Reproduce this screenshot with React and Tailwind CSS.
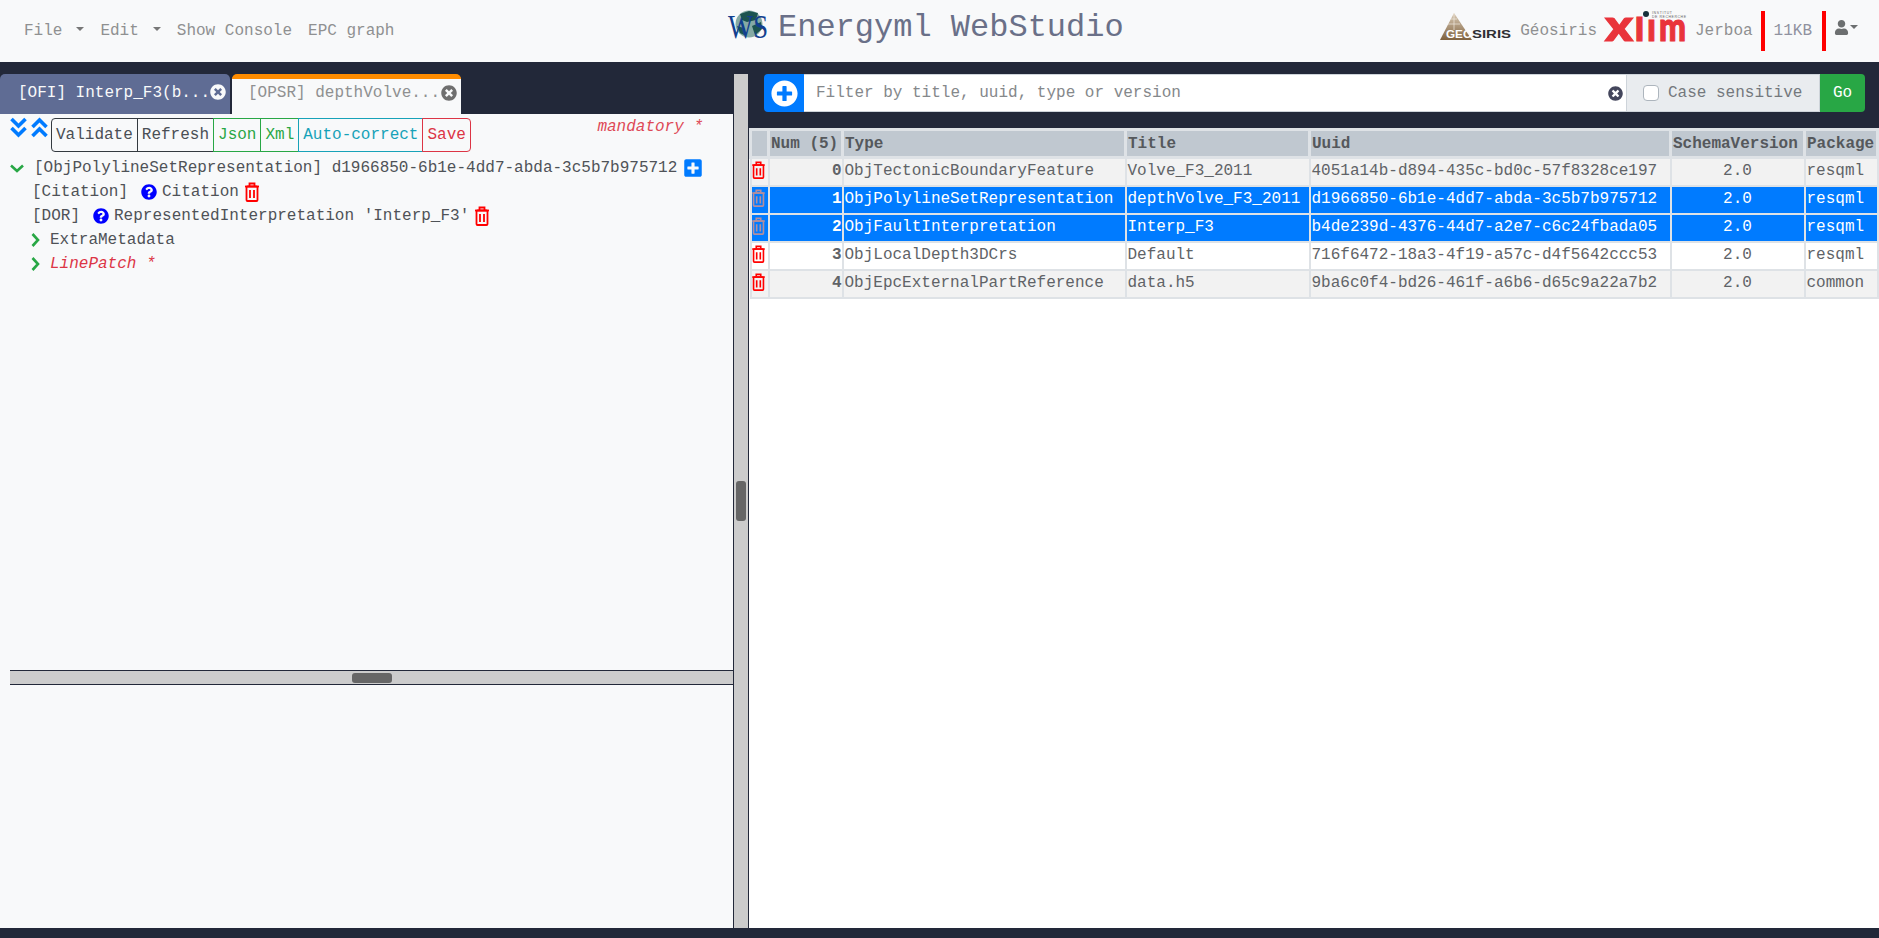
import React from "react";
import { FaPlusCircle, FaPlusSquare, FaQuestionCircle, FaTimesCircle, FaUser } from "react-icons/fa";

const rows = [
  ["ObjTectonicBoundaryFeature", "Volve_F3_2011", "4051a14b-d894-435c-bd0c-57f8328ce197", "resqml"],
  ["ObjPolylineSetRepresentation", "depthVolve_F3_2011", "d1966850-6b1e-4dd7-abda-3c5b7b975712", "resqml"],
  ["ObjFaultInterpretation", "Interp_F3", "b4de239d-4376-44d7-a2e7-c6c24fbada05", "resqml"],
  ["ObjLocalDepth3DCrs", "Default", "716f6472-18a3-4f19-a57c-d4f5642ccc53", "resqml"],
  ["ObjEpcExternalPartReference", "data.h5", "9ba6c0f4-bd26-461f-a6b6-d65c9a22a7b2", "common"],
];

const toolbarButtons = [
  ["Validate", "border-[#343a40] text-[#4a4f55] rounded-l-[4px]"],
  ["Refresh", "border-[#343a40] text-[#4a4f55] -ml-px"],
  ["Json", "border-[#28a745] text-[#28a745] -ml-px"],
  ["Xml", "border-[#28a745] text-[#28a745] -ml-px"],
  ["Auto-correct", "border-[#17a2b8] text-[#17a2b8] -ml-px"],
  ["Save", "border-[#dc3545] text-[#dc3545] -ml-px rounded-r-[4px]"],
];

const WsLogo = () => (
  <svg width="42" height="40" viewBox="0 0 42 40" className="shrink-0 overflow-visible">
    <circle cx="22" cy="16" r="13.5" fill="#86aaa4" />
    <path d="M13 6 L22 3 L31 5 L29 12 L20 14 L15 12 Z M25 18 L34 14 L35 21 L28 27 Z M10 18 L17 20 L19 28 L13 25 Z" fill="#1c5450" />
    <text x="1" y="30" fontFamily="Liberation Serif" fontSize="33" textLength="40" lengthAdjust="spacingAndGlyphs" fill="#123f8f">WS</text>
  </svg>
);

const GeosirisLogo = () => (
  <svg width="72" height="28" viewBox="0 0 72 28" className="shrink-0 overflow-visible">
    <defs>
      <linearGradient id="geoFill" x1="0" y1="0" x2="0" y2="1">
        <stop offset="0" stopColor="#d9cbb6" />
        <stop offset="1" stopColor="#80623f" />
      </linearGradient>
    </defs>
    <path d="M0 27 L14 0 L32 27 Z" fill="url(#geoFill)" />
    <path d="M14 0 L14 17 M8 11 L20 11 M11 6 L17 6" stroke="#f0e9df" strokeWidth="0.7" />
    <text x="6" y="25" fontFamily="Liberation Sans" fontWeight="700" fontSize="10.5" textLength="26" lengthAdjust="spacingAndGlyphs" fill="#ffffff">GEO</text>
    <text x="32" y="25" fontFamily="Liberation Sans" fontWeight="700" fontSize="10.5" textLength="39" lengthAdjust="spacingAndGlyphs" fill="#2f2f33">SIRIS</text>
  </svg>
);

// letters sized one by one, the real logo has a low l and a big x
const XlimLogo = () => (
  <svg width="82" height="32" viewBox="0 0 82 32" className="shrink-0 overflow-visible">
    <circle cx="41" cy="4" r="3" fill="#17303b" />
    <text x="47" y="4" fontFamily="Liberation Sans" fontSize="3.5" textLength="20" fill="#666666">INSTITUT</text>
    <text x="47" y="8" fontFamily="Liberation Sans" fontSize="3.5" textLength="34" fill="#666666">DE RECHERCHE</text>
    <g fontFamily="Lato, Liberation Sans" fontWeight="900" fill="#e9343b" stroke="#e9343b" strokeWidth="1.2">
      <text x="0" y="31" fontSize="44" textLength="28" lengthAdjust="spacingAndGlyphs">x</text>
      <text x="30" y="31" fontSize="32" textLength="9" lengthAdjust="spacingAndGlyphs">l</text>
      <text x="42" y="31" fontSize="40" textLength="9" lengthAdjust="spacingAndGlyphs">ı</text>
      <text x="54" y="31" fontSize="40" textLength="27" lengthAdjust="spacingAndGlyphs">m</text>
    </g>
  </svg>
);

// outlined bin with two bars, the icon package versions have three
const TrashIcon = ({ width = 16, height = 20, color = "#ff0000" }) => (
  <svg width={width} height={height} viewBox="0 0 16 20" fill="none" stroke={color} strokeWidth="1.8" className="shrink-0">
    <path d="M1 4.5 H15" />
    <path d="M5.5 4 V1.5 H10.5 V4" />
    <rect x="2.5" y="4.5" width="11" height="14.5" rx="1" />
    <path d="M6 8 V16 M10 8 V16" />
  </svg>
);

const DoubleAngle = ({ up = false }) => (
  <svg width="17" height="21" viewBox="0 0 17 21" fill="none" stroke="#007bff" strokeWidth="3.6" className="shrink-0">
    <g transform={up ? "rotate(180 8.5 10.5)" : undefined}>
      <path d="M1.5 2 L8.5 9 L15.5 2" />
      <path d="M1.5 11 L8.5 18 L15.5 11" />
    </g>
  </svg>
);

const ChevronDown = () => (
  <svg width="14" height="9" viewBox="0 0 14 9" fill="none" stroke="#28a745" strokeWidth="2.6" className="shrink-0">
    <path d="M1 1.5 L7 7 L13 1.5" />
  </svg>
);

const ChevronRight = () => (
  <svg width="9" height="14" viewBox="0 0 9 14" fill="none" stroke="#28a745" strokeWidth="2.6" className="shrink-0">
    <path d="M1.5 1 L7 7 L1.5 13" />
  </svg>
);

export default function App() {
  return (
    <div className="h-[938px] w-[1879px] overflow-hidden bg-[#222839] flex flex-col font-['Liberation_Mono',monospace] text-[16px] leading-6">
      {/* top navbar */}
      <header className="h-[62px] shrink-0 bg-[#f8f9fa] relative flex items-center justify-between pl-6 pr-[21px] text-[#8f9091]">
        <nav className="flex items-center">
          <span className="mr-4 flex items-center">File<span className="ml-[14px] mb-[5px] border-x-4 border-t-4 border-x-transparent border-t-[#777777]" /></span>
          <span className="mr-4 flex items-center">Edit<span className="ml-[14px] mb-[5px] border-x-4 border-t-4 border-x-transparent border-t-[#777777]" /></span>
          <span className="mr-4">Show Console</span>
          <span>EPC graph</span>
        </nav>
        <div className="absolute left-[727px] top-[8px] flex items-center gap-[9px]">
          <WsLogo />
          <span className="text-[32px] leading-10 text-[#6a7088]">Energyml WebStudio</span>
        </div>
        <div className="flex items-center h-10">
          <span className="mb-2"><GeosirisLogo /></span>
          <span className="ml-2">Géosiris</span>
          <span className="ml-2 mb-[10px]"><XlimLogo /></span>
          <span className="ml-2">Jerboa</span>
          <span className="ml-2 w-1 h-10 bg-[#ff0000]" />
          <span className="ml-[9px] text-[#9092a0]">11KB</span>
          <span className="ml-[10px] w-1 h-10 bg-[#ff0000]" />
          <span className="ml-2 flex items-center text-[#6c6f70] mb-2">
            <FaUser className="text-[15px]" />
            <span className="ml-px border-x-[4px] border-t-[4px] border-x-transparent border-t-[#6c6f70]" />
          </span>
        </div>
      </header>

      {/* workspace */}
      <main className="flex-1 min-h-0 flex pt-3">
        {/* left panel */}
        <section className="w-[733px] shrink-0 flex flex-col">
          <div className="h-10 shrink-0 flex items-stretch gap-[2px]">
            <div className="w-[230px] rounded-t-[5px] bg-[#5f6c94] text-[#f8f9fa] flex items-center pl-[18px] pr-1 pb-[2px] justify-between whitespace-nowrap">
              <span>[OFI] Interp_F3(b...</span>
              <FaTimesCircle className="text-[16px] mb-[2px] shrink-0" />
            </div>
            <div className="w-[229px] rounded-t-[5px] bg-[#f8f9fa] border-t-[5px] border-t-[#ff8c00] text-[#8f9091] flex items-center pl-4 pr-1 pb-[7px] justify-between whitespace-nowrap">
              <span>[OPSR] depthVolve...</span>
              <FaTimesCircle className="text-[16px] text-[#6f6f6f] shrink-0" />
            </div>
          </div>
          <div className="h-[556px] shrink-0 bg-[#f8f9fa] relative text-[#4f5257]">
            <div className="flex items-start pt-[3px]">
              <span className="ml-[10px]"><DoubleAngle /></span>
              <span className="ml-1"><DoubleAngle up /></span>
              <div className="flex ml-[3px] mt-px">
                {toolbarButtons.map(([label, cls]) => (
                  <button key={label} className={`h-[34px] px-1 border bg-transparent ${cls}`}>{label}</button>
                ))}
              </div>
            </div>
            <span className="absolute right-[30px] top-[1px] italic text-[#dc3545] opacity-90">mandatory *</span>
            <div className="mt-1 pl-[10px]">
              <div className="h-6 flex items-center">
                <ChevronDown />
                <span className="ml-[10px]">[ObjPolylineSetRepresentation] d1966850-6b1e-4dd7-abda-3c5b7b975712</span>
                <FaPlusSquare className="text-[#007bff] text-[20px] ml-[6px]" />
              </div>
              <div className="h-6 flex items-center pl-[22px]">
                <span>[Citation]</span>
                <FaQuestionCircle className="text-[#0000ff] text-[16px] ml-[13px] mr-[5px]" />
                <span>Citation</span>
                <span className="ml-[5px]"><TrashIcon /></span>
              </div>
              <div className="h-6 flex items-center pl-[22px]">
                <span>[DOR]</span>
                <FaQuestionCircle className="text-[#0000ff] text-[16px] ml-[13px] mr-[5px]" />
                <span>RepresentedInterpretation 'Interp_F3'</span>
                <span className="ml-[5px]"><TrashIcon /></span>
              </div>
              <div className="h-6 flex items-center pl-[21px]">
                <ChevronRight />
                <span className="ml-[10px]">ExtraMetadata</span>
              </div>
              <div className="h-6 flex items-center pl-[21px]">
                <ChevronRight />
                <span className="ml-[10px] italic text-[#dc3545]">LinePatch *</span>
              </div>
            </div>
          </div>
          <div className="flex-1 flex flex-col bg-[#f8f9fa] pl-[10px]">
            <div className="h-[15px] shrink-0 bg-[#cccccc] border-y border-[#222839] flex items-center justify-center">
              <span className="w-10 h-[10px] rounded-[3px] bg-[#666666]" />
            </div>
          </div>
        </section>

        {/* splitter */}
        <div className="w-[16px] shrink-0 bg-[#cccccc] border-x border-[#222839] flex items-center justify-center">
          <span className="w-[10px] h-10 rounded-[3px] bg-[#666666]" />
        </div>

        {/* right panel */}
        <section className="flex-1 min-w-0 flex flex-col">
          <div className="h-[38px] ml-[15px] mr-[14px] mb-[16px] flex shrink-0">
            <div className="w-10 rounded-l-[4px] bg-[#007bff] flex items-center justify-center">
              <FaPlusCircle className="text-white text-[27px]" />
            </div>
            <div className="flex-1 bg-white border-y border-[#ced4da] flex items-center pl-3 pr-[3px] justify-between text-[#85888b]">
              <span>Filter by title, uuid, type or version</span>
              <FaTimesCircle className="text-[#44465c] text-[15px]" />
            </div>
            <div className="w-[194px] bg-[#e9ecef] border border-[#ced4da] flex items-center pl-4 text-[#74787d]">
              <span className="w-4 h-4 rounded-[4px] border border-[#adb5bd] bg-white mr-[9px]" />
              <span>Case sensitive</span>
            </div>
            <div className="w-[45px] rounded-r-[4px] bg-[#28a745] text-white flex items-center justify-center">Go</div>
          </div>
          <div className="flex-1 bg-white">
            <table className="table-fixed border-collapse w-[1130px] text-[#606367] text-[16px]">
              <colgroup>
                <col className="w-[18px]" />
                <col className="w-[74px]" />
                <col className="w-[283px]" />
                <col className="w-[184px]" />
                <col className="w-[361px]" />
                <col className="w-[134px]" />
                <col className="w-[73px]" />
              </colgroup>
              <thead>
                <tr className="h-[28px] bg-[#c0c8d0] text-[#55585c]">
                  {["", "Num (5)", "Type", "Title", "Uuid", "SchemaVersion", "Package"].map((h) => (
                    <th key={h} className="border-[3px] border-[#dee2e6] p-0 pl-px text-left font-bold whitespace-nowrap overflow-hidden">{h}</th>
                  ))}
                </tr>
              </thead>
              <tbody>
                {rows.map((r, i) => {
                  const selected = i === 1 || i === 2;
                  const bg = selected ? "bg-[#007bff] text-white" : i % 2 === 0 ? "bg-[#f2f2f2]" : "bg-white";
                  return (
                    <tr key={r[2]} className={`h-7 ${bg}`}>
                      <td className="border-2 border-[#dee2e6] p-0 pb-[2px]">
                        <span className="flex justify-center mb-[3px] pr-[2px]">
                          <TrashIcon width={15} height={18} color={selected ? "#b58e9c" : "#ff0000"} />
                        </span>
                      </td>
                      <td className="border-2 border-[#dee2e6] p-0 pb-[2px] text-right font-bold">{i}</td>
                      <td className="border-2 border-[#dee2e6] p-0 pb-[2px] pl-px">{r[0]}</td>
                      <td className="border-2 border-[#dee2e6] p-0 pb-[2px] pl-px">{r[1]}</td>
                      <td className="border-2 border-[#dee2e6] p-0 pb-[2px] pl-px">{r[2]}</td>
                      <td className="border-2 border-[#dee2e6] p-0 pb-[2px] text-center">2.0</td>
                      <td className="border-2 border-[#dee2e6] p-0 pb-[2px] pl-px">{r[3]}</td>
                    </tr>
                  );
                })}
              </tbody>
            </table>
          </div>
        </section>
      </main>
      <div className="h-[10px] shrink-0" />
    </div>
  );
}
